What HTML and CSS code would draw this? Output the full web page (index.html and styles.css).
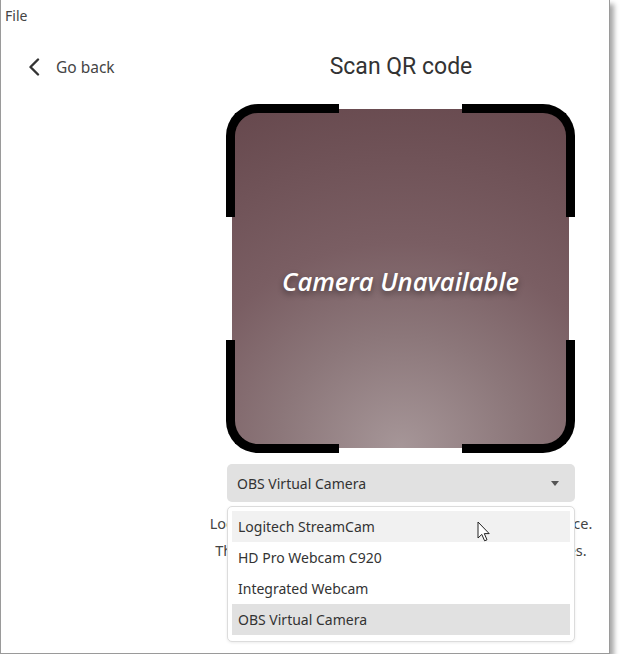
FILE: index.html
```html
<!DOCTYPE html>
<html lang="en">
<head>
  <meta charset="UTF-8" />
  <title>Scan QR code</title>
  <link rel="stylesheet" href="styles.css">
</head>
<body>
  <div class="window">
    <div class="menubar">File</div>

    <div class="main">
      <div class="side">
        <a class="back" href="#">
          <svg class="back-icon" width="12" height="18" viewBox="0 0 12 18">
            <path d="M10 1.5 L2.5 9 L10 16.5" fill="none" stroke="#333" stroke-width="2.4" stroke-linecap="round" stroke-linejoin="round"/>
          </svg>
          <span>Go back</span>
        </a>
      </div>

      <div class="content">
        <h1 class="title">Scan QR code</h1>

        <div class="frame">
          <div class="preview">
            <span class="preview-text">Camera Unavailable</span>
          </div>
          <span class="corner tl"></span>
          <span class="corner tr"></span>
          <span class="corner bl"></span>
          <span class="corner br"></span>
        </div>

        <div class="picker">
          <div class="select">
            <span>OBS Virtual Camera</span>
            <span class="caret"></span>
          </div>

          <p class="hint">Locate the QR code shown on the display of your device.<br>Then aim this webcam at it to connect the two devices.</p>

          <ul class="menu">
            <li class="item hover">Logitech StreamCam</li>
            <li class="item">HD Pro Webcam C920</li>
            <li class="item">Integrated Webcam</li>
            <li class="item selected">OBS Virtual Camera</li>
          </ul>

          <svg class="pointer" width="14" height="22" viewBox="0 0 14 22">
            <path d="M1 1 L1 17 L4.8 13.4 L7.6 19.8 L10 18.8 L7.3 12.6 L12.2 12.6 Z" fill="#fff" stroke="#222" stroke-width="1" stroke-linejoin="round"/>
          </svg>
        </div>
      </div>
    </div>
  </div>
</body>
</html>
```

FILE: styles.css
```css
body {
  margin: 0;
  background: #fff;
  font-family: 'Noto Sans', 'Open Sans', sans-serif;
  color: #444;
}
.window {
  width: 608px;
  height: 653px;
  border: 1px solid #9a9a9a;
  border-top: none;
  background: #fff;
  box-shadow: 4px 4px 5px rgba(0, 0, 0, 0.35);
  overflow: hidden;
}
.menubar {
  padding: 6px 4px;
  font-size: 14px;
  line-height: 20px;
  color: #444;
}
.main {
  display: grid;
  grid-template-columns: 226px 348px;
  padding-top: 20px;
}
.side {
  padding-left: 27px;
}
.back {
  display: flex;
  align-items: center;
  gap: 16px;
  height: 30px;
  color: #444;
  text-decoration: none;
  font-size: 15.5px;
}
.back-icon {
  display: block;
}
.content {
  display: flex;
  flex-direction: column;
  align-items: center;
}
.title {
  margin: 0;
  font-family: Roboto, 'Noto Sans', sans-serif;
  font-weight: 400;
  font-size: 23px;
  line-height: 30px;
  color: #333;
}
.frame {
  position: relative;
  width: 349px;
  height: 349px;
  margin-top: 22px;
  margin-left: -1px;
}
.preview {
  margin: 5px 6px;
  height: 339px;
  border-radius: 20px;
  background: radial-gradient(ellipse 120% 110% at 50% 100%, #a69698 0%, #8c777a 30%, #7a5e63 55%, #66484d 100%);
  display: flex;
  align-items: center;
  justify-content: center;
}
.preview-text {
  margin-top: 4px;
  font-family: 'Open Sans', 'Noto Sans', sans-serif;
  font-style: italic;
  font-weight: 600;
  font-size: 25.5px;
  color: #fff;
  text-shadow: 0 3px 6px rgba(0, 0, 0, 0.45);
}
.corner {
  position: absolute;
  width: 104px;
  height: 104px;
  border: 0 solid #000;
}
.tl { top: 0; left: 0; border-top-width: 9px; border-left-width: 9px; border-top-left-radius: 32px; }
.tr { top: 0; right: 0; border-top-width: 9px; border-right-width: 9px; border-top-right-radius: 32px; }
.bl { bottom: 0; left: 0; border-bottom-width: 9px; border-left-width: 9px; border-bottom-left-radius: 32px; }
.br { bottom: 0; right: 0; border-bottom-width: 9px; border-right-width: 9px; border-bottom-right-radius: 32px; }
.picker {
  position: relative;
  width: 348px;
  margin-top: 11px;
}
.select {
  display: flex;
  align-items: center;
  justify-content: space-between;
  height: 38px;
  padding: 0 16px 0 10px;
  border-radius: 5px;
  background: #e1e1e1;
  font-size: 14px;
  color: #333;
}
.caret {
  width: 0;
  height: 0;
  border-left: 4.5px solid transparent;
  border-right: 4.5px solid transparent;
  border-top: 5px solid #555;
}
.hint {
  margin: 8px -40px 0;
  text-align: center;
  white-space: nowrap;
  font-size: 14.5px;
  line-height: 27px;
  color: #444;
}
.menu {
  position: absolute;
  top: 42px;
  left: 0;
  right: 0;
  margin: 0;
  padding: 4px 4px 6px;
  list-style: none;
  background: #fff;
  border: 1px solid #dcdcdc;
  border-radius: 5px;
  box-shadow: 0 1px 3px rgba(0, 0, 0, 0.08);
}
.item {
  height: 31px;
  line-height: 31px;
  padding-left: 6px;
  font-size: 14px;
  color: #333;
}
.item.hover {
  background: #f1f1f1;
}
.item.selected {
  background: #e1e1e1;
}
.pointer {
  position: absolute;
  left: 250px;
  top: 57px;
}
```
